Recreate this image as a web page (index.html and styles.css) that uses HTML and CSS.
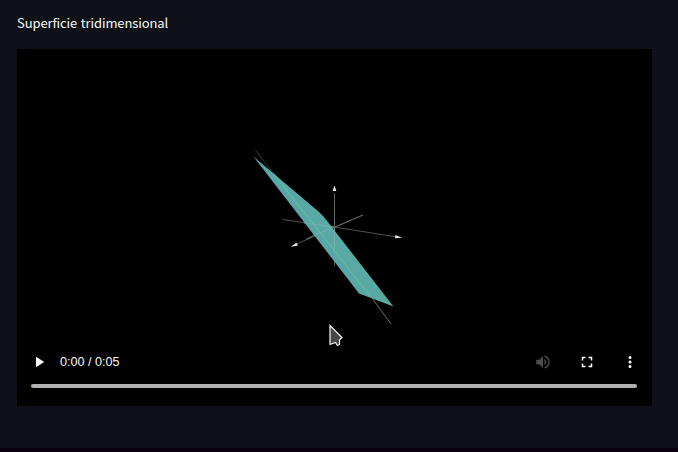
FILE: index.html
```html
<!DOCTYPE html>
<html lang="es">
<head>
<meta charset="utf-8">
<title>Superficie tridimensional</title>
<link rel="stylesheet" href="styles.css">
</head>
<body>
<main class="page">
  <h1 class="title">Superficie tridimensional</h1>
  <section class="player">
    <svg class="scene" viewBox="17 49 635 292">
      <defs>
        <linearGradient id="face" gradientUnits="userSpaceOnUse" x1="295" y1="250" x2="350" y2="212">
          <stop offset="0" stop-color="#55a5b5"/>
          <stop offset="1" stop-color="#5cab99"/>
        </linearGradient>
      </defs>
      <path class="axis" d="M282.500 219.500 334 227M334.500 193v73M363 215l-71 31"/>
      <path class="guide" d="m255.500 150 18 23.500"/>
      <path fill="url(#face)" d="M253.500 156.500 318.500 211.500 324 217 393.500 306.500 359 293.500Z"/>
      <path class="inner-axis" d="M304 223 334 227 306 239M334.500 227v26"/>
      <path class="contour" d="M273.500 173.500 302 210 331 246 358 281 370.500 296"/>
      <path class="guide guide-end" d="m370.500 296 20.500 28"/>
      <path class="axis" d="M334.500 194v33L363 215M334 227l63 10"/>
      <path class="tip" d="m334.500 185.500 1.900 5.500h-3.800zM402 237.700l-7 .6.500-3.300zM291 246.700l5.300-3.900 1.700 2.700z"/>
    </svg>
    <div class="controls">
      <button class="play" aria-label="Reproducir"><svg viewBox="0 0 24 24"><path d="M8 5v14l11-7z"/></svg></button>
      <span class="time">0:00 / 0:05</span>
      <div class="actions">
        <button class="muted" aria-label="Volumen"><svg viewBox="0 0 24 24"><path d="M3 9v6h4l5 5V4L7 9H3zm13.500 3A4.500 4.500 0 0 0 14 7.970v8.050A4.500 4.500 0 0 0 16.500 12zM14 3.230v2.060a7 7 0 0 1 0 13.420v2.060a9 9 0 0 0 0-17.540z"/></svg></button>
        <button aria-label="Pantalla completa"><svg viewBox="0 0 24 24"><path d="M7 14H5v5h5v-2H7v-3zm-2-4h2V7h3V5H5v5zm12 7h-3v2h5v-5h-2v3zM14 5v2h3v3h2V5h-5z"/></svg></button>
        <button aria-label="Más opciones"><svg viewBox="0 0 24 24"><path d="M12 8a2 2 0 1 0 0-4 2 2 0 0 0 0 4zm0 2a2 2 0 1 0 0 4 2 2 0 0 0 0-4zm0 6a2 2 0 1 0 0 4 2 2 0 0 0 0-4z"/></svg></button>
      </div>
    </div>
    <div class="timeline"></div>
    <svg class="pointer" viewBox="0 0 14 23"><path d="M1 1.500V20.500L6.500 18.500 8.500 21.500 10.500 20.500V16L13 13.500Z"/></svg>
  </section>
</main>
</body>
</html>
```
FILE: styles.css
```css
* { box-sizing: border-box; }
body {
  margin: 0;
  background: #0e1117;
  color: #fafafa;
}
.page {
  height: 452px;
  padding: 12px 26px 0 17px;
  border-bottom: 4px solid #08000a;
}
.title {
  height: 37px;
  margin: 0;
  font: 400 13px/22px "Noto Sans CJK SC", sans-serif;
  letter-spacing: -.1px;
  word-spacing: .8px;
  white-space: nowrap;
}
.player {
  position: relative;
  height: 357px;
  background: #000;
}
.scene {
  display: block;
  width: 635px;
  height: 292px;
}
.axis, .inner-axis, .guide, .contour { fill: none; }
.axis { stroke: #686868; stroke-width: .8; }
.inner-axis { stroke: #83b7ad; stroke-width: .6; }
.guide { stroke: #474936; stroke-width: .8; }
.guide-end { stroke: #858d60; }
.contour { stroke: #67c58c; stroke-width: 1; }
.tip { fill: #ededed; }
.controls {
  display: flex;
  align-items: center;
  height: 42px;
  padding: 0 13px;
}
button {
  display: block;
  padding: 0;
  border: 0;
  background: none;
}
button svg {
  display: block;
  width: 18px;
  height: 18px;
  fill: #fff;
}
.time {
  margin-left: 12px;
  font: 12.600px/16px "Liberation Sans", sans-serif;
}
.actions {
  display: flex;
  gap: 25.500px;
  margin-left: auto;
}
.muted { opacity: .3; }
.timeline {
  height: 4px;
  margin: 1px 15px 0 14px;
  border-radius: 2px;
  background: #b1b1b1;
}
.pointer {
  position: absolute;
  left: 311.500px;
  top: 275px;
  width: 14px;
  height: 23px;
  fill: #484848;
  stroke: #f4f4f4;
  stroke-width: 1.200;
}
```
